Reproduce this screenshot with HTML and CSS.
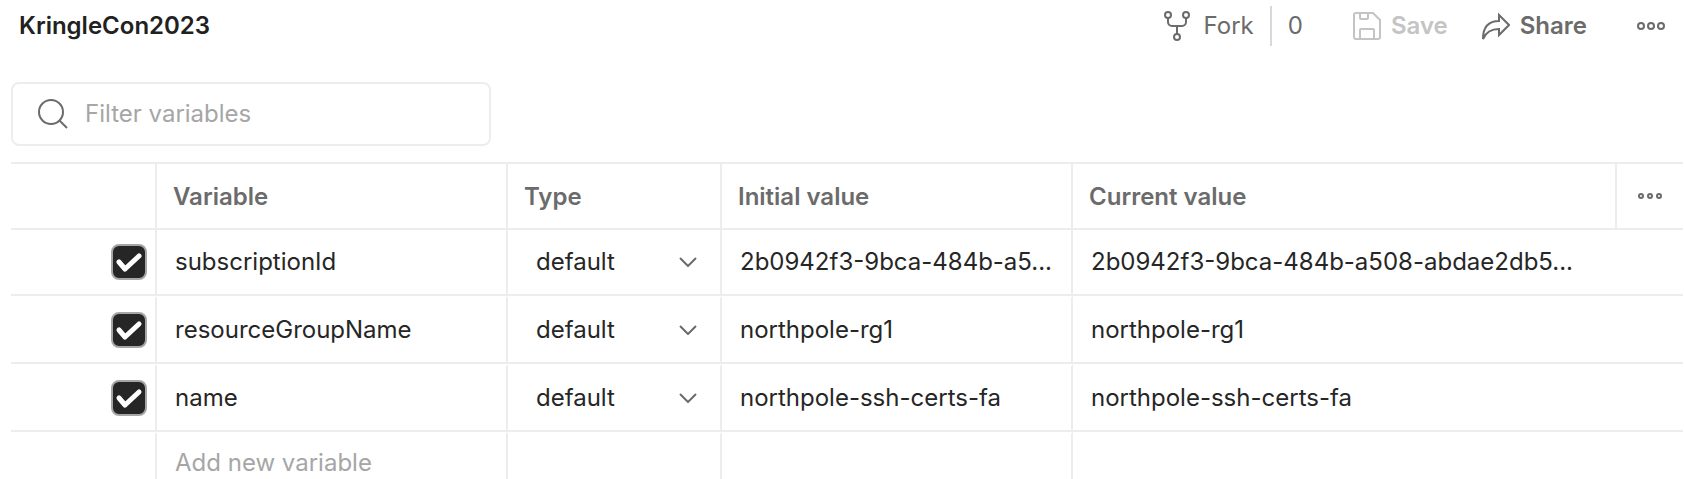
FILE: index.html
```html
<!DOCTYPE html>
<html lang="en">
<head>
  <meta charset="UTF-8">
  <meta name="viewport" content="width=device-width, initial-scale=1.0">
  <title>KringleCon2023</title>
  <link rel="stylesheet" href="styles.css">
</head>
<body>
  <header class="topbar">
    <h1 class="title">KringleCon2023</h1>
    <div class="actions">
      <button class="btn fork">
        <svg width="26" height="30" viewBox="0 0 26 30"><circle cx="4" cy="4" r="3"/><circle cx="22" cy="4" r="3"/><circle cx="13" cy="26" r="3"/><path d="M4 7v4a4 4 0 0 0 4 4h10a4 4 0 0 0 4-4V7M13 15v8"/></svg>
        Fork
      </button>
      <span class="count">0</span>
      <button class="btn save" disabled>
        <svg width="28" height="30" viewBox="0 0 28 30"><path d="M3 2h17l7 7v17a2 2 0 0 1-2 2H3a2 2 0 0 1-2-2V4a2 2 0 0 1 2-2zM7 2v5a1 1 0 0 0 1 1h6a1 1 0 0 0 1-1V2M7 28V19a1 1 0 0 1 1-1h12a1 1 0 0 1 1 1v9"/></svg>
        Save
      </button>
      <button class="btn share">
        <svg width="28" height="30" viewBox="0 0 28 30"><path d="M17 4l10 10-10 10v-6C9 18 4 21 1 28 1 16 7 10 17 10z"/></svg>
        Share
      </button>
      <button class="btn more" aria-label="More actions">
        <svg width="28" height="10" viewBox="0 0 28 10"><circle cx="4" cy="5" r="3"/><circle cx="14" cy="5" r="3"/><circle cx="24" cy="5" r="3"/></svg>
      </button>
    </div>
  </header>

  <label class="filter">
    <svg width="30" height="30" viewBox="0 0 30 30"><circle cx="13" cy="13" r="12"/><path d="M21 21l8 8"/></svg>
    <input type="text" placeholder="Filter variables" aria-label="Filter variables">
  </label>

  <table class="vars">
    <colgroup>
      <col class="col-check"><col class="col-name"><col class="col-type"><col class="col-name"><col><col class="col-more">
    </colgroup>
    <thead>
      <tr>
        <th></th>
        <th>Variable</th>
        <th>Type</th>
        <th>Initial value</th>
        <th>Current value</th>
        <th class="last">
          <button class="btn more" aria-label="Table options">
            <svg width="24" height="8" viewBox="0 0 24 8"><circle cx="3" cy="4" r="2"/><circle cx="12" cy="4" r="2"/><circle cx="21" cy="4" r="2"/></svg>
          </button>
        </th>
      </tr>
    </thead>
    <tbody>
      <tr>
        <td><span class="check"><input type="checkbox" aria-label="subscriptionId" checked><svg width="36" height="36" viewBox="0 0 36 36"><path d="M8 18l6 7 14-13"/></svg></span></td>
        <td>subscriptionId</td>
        <td><span class="type"><select aria-label="Type"><option>default</option><option>secret</option></select><svg width="18" height="10" viewBox="0 0 18 10"><path d="M1 1l8 8 8-8"/></svg></span></td>
        <td>2b0942f3-9bca-484b-a5...</td>
        <td class="last" colspan="2">2b0942f3-9bca-484b-a508-abdae2db5...</td>
      </tr>
      <tr>
        <td><span class="check"><input type="checkbox" aria-label="resourceGroupName" checked><svg width="36" height="36" viewBox="0 0 36 36"><path d="M8 18l6 7 14-13"/></svg></span></td>
        <td>resourceGroupName</td>
        <td><span class="type"><select aria-label="Type"><option>default</option><option>secret</option></select><svg width="18" height="10" viewBox="0 0 18 10"><path d="M1 1l8 8 8-8"/></svg></span></td>
        <td>northpole-rg1</td>
        <td class="last" colspan="2">northpole-rg1</td>
      </tr>
      <tr>
        <td><span class="check"><input type="checkbox" aria-label="name" checked><svg width="36" height="36" viewBox="0 0 36 36"><path d="M8 18l6 7 14-13"/></svg></span></td>
        <td>name</td>
        <td><span class="type"><select aria-label="Type"><option>default</option><option>secret</option></select><svg width="18" height="10" viewBox="0 0 18 10"><path d="M1 1l8 8 8-8"/></svg></span></td>
        <td>northpole-ssh-certs-fa</td>
        <td class="last" colspan="2">northpole-ssh-certs-fa</td>
      </tr>
      <tr class="new-row">
        <td></td>
        <td><input class="add" type="text" placeholder="Add new variable" aria-label="Add new variable"></td>
        <td></td>
        <td></td>
        <td class="last" colspan="2"></td>
      </tr>
    </tbody>
  </table>
</body>
</html>
```

FILE: styles.css
```css
* {
  box-sizing: border-box;
}
html {
  overflow: hidden;
}
body {
  margin: 0;
  padding: 0 1px 0 11px;
  background: #fff;
  color: #262626;
  font-family: Inter, sans-serif;
  font-size: 24px;
  line-height: 32px;
}
button, input, select {
  font: inherit;
  color: inherit;
}
svg {
  flex: none;
  fill: none;
  stroke: #6b6b6b;
  stroke-width: 2;
}
.topbar {
  display: flex;
  justify-content: space-between;
  align-items: center;
  height: 52px;
  padding: 0 18px 0 8px;
}
.title {
  margin: 0;
  color: #212121;
  font-size: 24px;
  font-weight: 600;
}
.actions {
  display: flex;
  align-items: center;
  color: #6b6b6b;
}
.btn {
  display: flex;
  align-items: center;
  gap: 10px;
  padding: 0;
  border: none;
  background: none;
  cursor: pointer;
}
.fork {
  gap: 14px;
}
.count {
  margin: 0 50px 0 16px;
  padding-left: 16px;
  border-left: 2px solid #d9d9d9;
  line-height: 40px;
}
.save, .share {
  font-weight: 600;
  margin-right: 34px;
}
.save {
  color: #c4c4c4;
  cursor: default;
}
.save svg {
  stroke: #c4c4c4;
}
.share {
  margin-right: 50px;
}
.filter {
  display: flex;
  align-items: center;
  gap: 17px;
  width: 480px;
  height: 64px;
  margin: 30px 0 16px;
  padding: 0 25px;
  border: 2px solid #ededed;
  border-radius: 8px;
}
.filter input, .add {
  flex: 1;
  width: 100%;
  padding: 0;
  border: none;
  outline: none;
  background: none;
}
::placeholder {
  color: #a6a6a6;
  opacity: 1;
}
.vars {
  width: 100%;
  table-layout: fixed;
  border-collapse: separate;
  border-spacing: 0;
  border-top: 2px solid #ededed;
}
.col-check {
  width: 146px;
}
.col-name {
  width: 351px;
}
.col-type {
  width: 214px;
}
.col-more {
  width: 66px;
}
th, td {
  height: 66px;
  padding: 0 18px;
  border-right: 2px solid #ededed;
  border-bottom: 2px solid #ededed;
  text-align: left;
  white-space: nowrap;
}
th {
  padding: 2px 16px 0;
  color: #6b6b6b;
  font-weight: 600;
}
th.last, td.last {
  border-right: none;
}
th.last {
  padding-top: 0;
}
th .more {
  margin: 0 auto;
}
/* short break in the column lines above each row */
tbody tr + tr td {
  height: 68px;
  border-top: 2px solid #fff;
}
tbody .new-row td {
  height: 62px;
}
td:first-child {
  padding: 0 8px;
}
.check {
  display: grid;
  justify-content: end;
}
.check input, .check svg {
  grid-area: 1 / 1;
}
.check input {
  appearance: none;
  width: 36px;
  height: 36px;
  margin: 0;
  border: 2px solid #a6a6a6;
  border-radius: 8px;
  background: #262626;
}
.check svg {
  z-index: 1;
  pointer-events: none;
  stroke: transparent;
  stroke-width: 5;
  stroke-linecap: round;
  stroke-linejoin: round;
}
.check input:checked + svg {
  stroke: #fff;
}
.type {
  display: grid;
  align-items: center;
  padding: 0 5px 0 10px;
}
.type select, .type svg {
  grid-area: 1 / 1;
}
.type select {
  appearance: none;
  padding: 0;
  border: none;
  outline: none;
  background: none;
}
.type svg {
  justify-self: end;
  pointer-events: none;
}
```
